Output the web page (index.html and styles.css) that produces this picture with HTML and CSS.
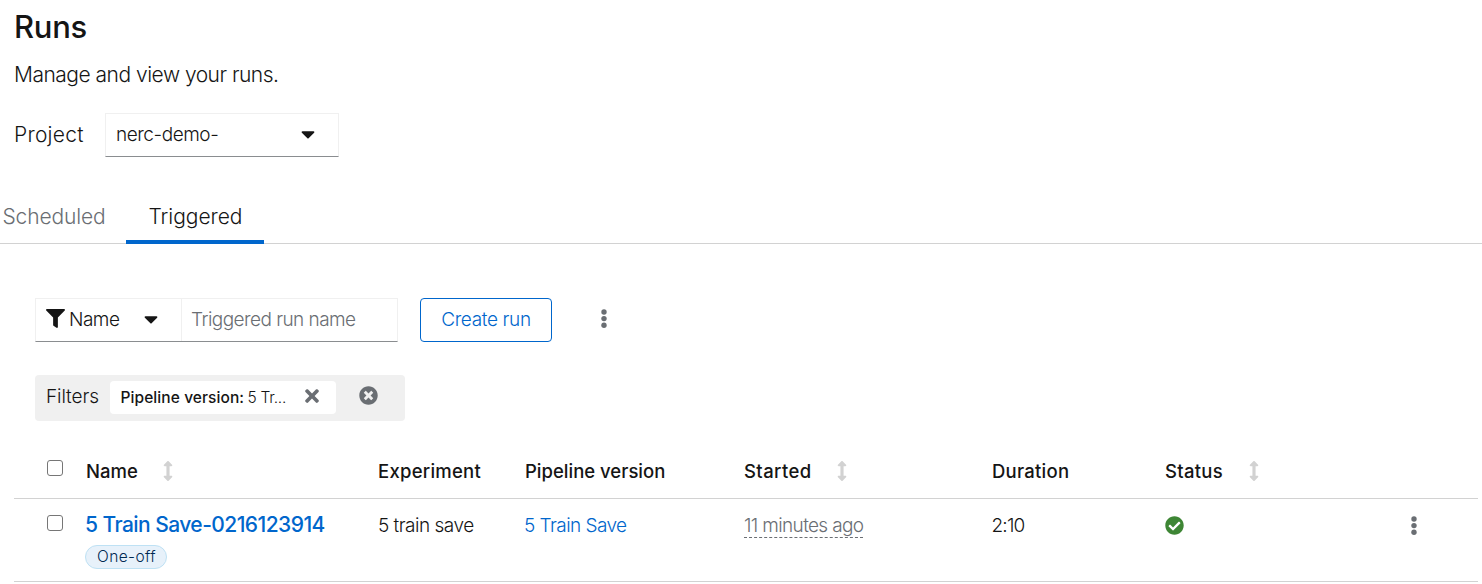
FILE: index.html
```html
<!DOCTYPE html>
<html lang="en">
<head>
<meta charset="utf-8">
<title>Runs</title>
<link rel="stylesheet" href="styles.css">
</head>
<body>
<svg class="sprite" aria-hidden="true">
  <symbol id="caret" viewBox="0 0 320 512"><path d="M31.3 192h257.3c17.800 0 26.700 21.500 14.100 34.100L174.100 354.800c-7.800 7.800-20.500 7.800-28.300 0L17.200 226.100C4.600 213.500 13.500 192 31.300 192z"/></symbol>
  <symbol id="kebab" viewBox="0 0 6 20"><circle cx="3" cy="3" r="2.7"/><circle cx="3" cy="9.600" r="2.700"/><circle cx="3" cy="16.200" r="2.700"/></symbol>
  <symbol id="sort" viewBox="0 0 256 512"><path d="M214.059 377.941H168V134.059h46.059c21.382 0 32.090-25.851 16.971-40.971L144.971 7.029c-9.373-9.373-24.568-9.373-33.941 0L24.971 93.088c-15.119 15.119-4.411 40.971 16.971 40.971H88v243.882H41.941c-21.382 0-32.090 25.851-16.971 40.971l86.059 86.059c9.373 9.373 24.568 9.373 33.941 0l86.059-86.059c15.120-15.119 4.412-40.971-16.970-40.971z"/></symbol>
  <symbol id="times" viewBox="0 0 352 512"><path d="M242.720 256l100.070-100.070c12.280-12.280 12.280-32.190 0-44.480l-22.240-22.240c-12.280-12.280-32.190-12.280-44.480 0L176 189.280 75.930 89.210c-12.280-12.280-32.190-12.280-44.480 0L9.210 111.450c-12.280 12.280-12.280 32.190 0 44.480L109.280 256 9.210 356.070c-12.280 12.280-12.280 32.190 0 44.480l22.240 22.240c12.280 12.280 32.200 12.280 44.480 0L176 322.720l100.070 100.070c12.280 12.280 32.200 12.280 44.480 0l22.240-22.240c12.280-12.280 12.280-32.190 0-44.480L242.720 256z"/></symbol>
</svg>

<header class="page-header">
  <h1 class="title">Runs</h1>
  <p class="subtitle">Manage and view your runs.</p>
  <div class="project">
    <span class="project-label">Project</span>
    <button class="project-select"><span class="t-demo">nerc-demo-</span><svg class="caret"><use href="#caret"/></svg></button>
  </div>
</header>

<nav class="tabs">
  <a class="tab"><span class="t-scheduled">Scheduled</span></a>
  <a class="tab tab-active"><span class="t-triggered">Triggered</span></a>
</nav>

<main class="content">
  <div class="toolbar">
    <div class="filter-group">
      <button class="filter-select">
        <svg class="funnel" viewBox="0 0 512 512"><path d="M487.976 0H24.028C2.710 0-8.047 25.866 7.058 40.971L192 225.941V432c0 7.831 3.821 15.170 10.237 19.662l80 55.980C298.020 518.690 320 507.493 320 487.980V225.941l184.947-184.970C520.021 25.896 509.338 0 487.976 0z"/></svg>
        <span class="t-filter">Name</span>
        <svg class="caret"><use href="#caret"/></svg>
      </button>
      <div class="filter-input"><span class="t-placeholder">Triggered run name</span></div>
    </div>
    <button class="create"><span class="t-create">Create run</span></button>
    <svg class="kebab"><use href="#kebab"/></svg>
  </div>

  <div class="chips">
    <span class="chips-label">Filters</span>
    <div class="chip">
      <span class="chip-key">Pipeline version:</span><span class="chip-value">5 Tr...</span>
      <svg class="times"><use href="#times"/></svg>
    </div>
    <svg class="clear" viewBox="0 0 512 512"><path d="M256 8C119 8 8 119 8 256s111 248 248 248 248-111 248-248S393 8 256 8zm121.600 313.100c4.700 4.700 4.700 12.300 0 17L338 377.600c-4.700 4.700-12.300 4.700-17 0L256 312l-65.100 65.600c-4.700 4.700-12.300 4.700-17 0L134.400 338c-4.700-4.700-4.700-12.300 0-17l65.600-65-65.600-65.100c-4.700-4.700-4.700-12.300 0-17l39.600-39.600c4.700-4.700 12.300-4.700 17 0l65 65.700 65.100-65.600c4.700-4.700 12.300-4.700 17 0l39.600 39.600c4.700 4.700 4.700 12.300 0 17L312 256l65.600 65.100z"/></svg>
  </div>
</main>

<table class="runs">
  <colgroup><col class="c-check"><col class="c-name"><col class="c-exp"><col class="c-pipe"><col class="c-start"><col class="c-dur"><col class="c-status"><col class="c-act"></colgroup>
  <thead>
    <tr>
      <th class="check"><span class="box"></span></th>
      <th><div class="head"><span class="h-name">Name</span><svg class="sort"><use href="#sort"/></svg></div></th>
      <th><div class="head"><span class="h-exp">Experiment</span></div></th>
      <th><div class="head"><span class="h-pipe">Pipeline version</span></div></th>
      <th><div class="head"><span class="h-start">Started</span><svg class="sort"><use href="#sort"/></svg></div></th>
      <th><div class="head"><span class="h-dur">Duration</span></div></th>
      <th><div class="head"><span class="h-status">Status</span><svg class="sort"><use href="#sort"/></svg></div></th>
      <th></th>
    </tr>
  </thead>
  <tbody>
    <tr>
      <td class="check"><span class="box"></span></td>
      <td class="name-cell"><a class="run-name">5 Train Save-0216123914</a><span class="label"><span class="t-label">One-off</span></span></td>
      <td><span class="t-exp">5 train save</span></td>
      <td><a class="t-pipe">5 Train Save</a></td>
      <td><span class="ago">11 minutes ago</span></td>
      <td><span class="t-dur">2:10</span></td>
      <td><svg class="ok" viewBox="0 0 512 512"><path d="M504 256c0 136.967-111.033 248-248 248S8 392.967 8 256 119.033 8 256 8s248 111.033 248 248zM227.314 387.314l184-184c6.248-6.248 6.248-16.379 0-22.627l-22.627-22.627c-6.248-6.249-16.379-6.249-22.628 0L216 308.118l-70.059-70.059c-6.248-6.248-16.379-6.248-22.628 0l-22.627 22.627c-6.248 6.248-6.248 16.379 0 22.627l104 104c6.249 6.249 16.379 6.249 22.628.001z"/></svg></td>
      <td class="action"><svg class="kebab"><use href="#kebab"/></svg></td>
    </tr>
  </tbody>
</table>
</body>
</html>
```

FILE: styles.css
```css
* { box-sizing: border-box; }
body {
  margin: 0;
  background: #fff;
  color: #151515;
  font-family: Inter, "Open Sans", sans-serif;
  font-size: 19px;
  font-weight: 350;
  line-height: 30px;
  white-space: nowrap;
  overflow: hidden;
}
svg { display: block; flex: none; fill: currentColor; }
button { margin: 0; font: inherit; color: inherit; background: #fff; }
.sprite { position: absolute; width: 0; height: 0; }

.page-header { padding: 6px 14px 0; }
.title { margin: 0; font-size: 31px; line-height: 42px; font-weight: 450; letter-spacing: -0.3px; }
.subtitle { margin: 10px 0 0; font-size: 21px; line-height: 34px; letter-spacing: -0.5px; }
.project { display: flex; align-items: center; margin-top: 21px; height: 44px; }
.project-label { width: 91px; font-size: 21px; letter-spacing: 0.250px; }
.project-select {
  display: flex; align-items: center; justify-content: space-between;
  width: 234px; height: 44px; padding: 0 23.500px 1px 10px;
  border: 1px solid #f0f0f0; border-bottom-color: #8a8d90;
}
.t-demo { letter-spacing: -0.450px; }
.caret { width: 14px; height: 22px; margin-bottom: 2px; }

.tabs { display: flex; height: 54px; margin-top: 33px; border-bottom: 1px solid #d2d2d2; font-size: 21px; }
.tab { height: 54px; padding: 12px 0 0 2.500px; width: 126px; color: #6a6e73; letter-spacing: -0.150px; }
.tab-active { width: 138px; padding-left: 22.500px; color: #151515; border-bottom: 4px solid #06c; letter-spacing: -0.050px; }

.content { padding: 54px 35px 0; }
.toolbar { display: flex; align-items: center; height: 44px; }
.filter-group { display: flex; width: 363px; height: 44px; border: 1px solid #f0f0f0; border-bottom-color: #8a8d90; }
.filter-select { display: flex; align-items: center; width: 146px; border: 0; border-right: 1px solid #f0f0f0; padding: 0 0 1px 10px; }
.funnel { width: 19px; height: 19px; margin: 0 4px 2px 0; }
.t-filter { width: 74.500px; text-align: left; letter-spacing: -0.500px; }
.filter-input { padding: 6px 9px; color: #6a6e73; }
.t-placeholder { letter-spacing: -0.550px; }
.create { width: 132px; height: 44px; margin-left: 22px; padding: 0 0 1px; border: 1px solid #06c; border-radius: 4px; color: #06c; text-align: center; letter-spacing: -0.350px; }
.kebab { width: 6px; height: 20px; color: #6a6e73; }
.toolbar .kebab { margin: 0 0 2px 49.400px; }

.chips { display: flex; align-items: center; width: 370px; height: 46px; margin-top: 33px; padding-left: 11px; background: #f0f0f0; border-radius: 4px; }
.chips-label { width: 64px; padding: 0 0 3px; letter-spacing: -0.100px; }
.chip { display: flex; align-items: center; width: 226px; height: 33px; margin-bottom: 1px; padding-left: 10.500px; background: #fff; border-radius: 4px; font-size: 15.500px; }
.chip-key { width: 127px; font-weight: 550; letter-spacing: 0.080px; }
.chip-value { width: 55px; letter-spacing: -0.250px; }
.times { width: 14px; height: 20px; margin: 0 0 4px 2px; color: #6a6e73; }
.clear { width: 19px; height: 19px; margin: 0 0 5px 23px; color: #6a6e73; }

.runs { width: 1464px; margin: 22px 0 0 14px; table-layout: fixed; border-collapse: separate; border-spacing: 0; }
.c-check { width: 61px; }
.c-name { width: 292px; }
.c-exp { width: 147px; }
.c-pipe { width: 219px; }
.c-start { width: 248px; }
.c-dur { width: 173px; }
.c-status { width: 239px; }
.c-act { width: 85px; }
.runs th, .runs td { padding: 0 0 0 11px; text-align: left; vertical-align: top; border-bottom: 1px solid #d2d2d2; }
.runs th { height: 56px; font-size: 18.500px; font-weight: 550; }
.runs td { height: 83px; padding-top: 12px; }
.runs .check { padding: 17px 0 0 33px; }
.runs td.check { padding-top: 16px; }
.box { display: block; width: 16px; height: 16px; border: 1.500px solid #767676; border-radius: 3px; }
.head { display: flex; align-items: center; padding-top: 13px; }
.h-exp, .h-dur { letter-spacing: 0.250px; }
.h-start { letter-spacing: 0.400px; }
.h-status { letter-spacing: 0.300px; }
.sort { width: 10px; height: 20px; margin-left: 25.500px; color: #d2d2d2; }
.runs .name-cell { padding-top: 11px; }
.run-name { display: block; margin-left: -1px; color: #06c; font-size: 21px; font-weight: 450; letter-spacing: -0.550px; }
.label { display: block; width: 82px; height: 24px; margin: 5px 0 0 -1px; padding-left: 11px; border: 1px solid #bee1f4; border-radius: 12px; background: #e7f1fa; color: #002952; font-size: 15.500px; line-height: 21px; letter-spacing: 0.400px; }
.t-exp { letter-spacing: -0.500px; }
.t-pipe { margin-left: -1px; color: #06c; letter-spacing: -0.550px; }
.ago { display: inline-block; height: 27px; line-height: 30px; color: #6a6e73; border-bottom: 1px dashed #6a6e73; letter-spacing: -0.650px; }
.t-dur { margin-left: -0.500px; letter-spacing: -0.800px; }
.ok { width: 19px; height: 19px; margin-top: 5px; color: #3e8635; }
.runs .action { padding: 17px 0 0 18.400px; }
```
